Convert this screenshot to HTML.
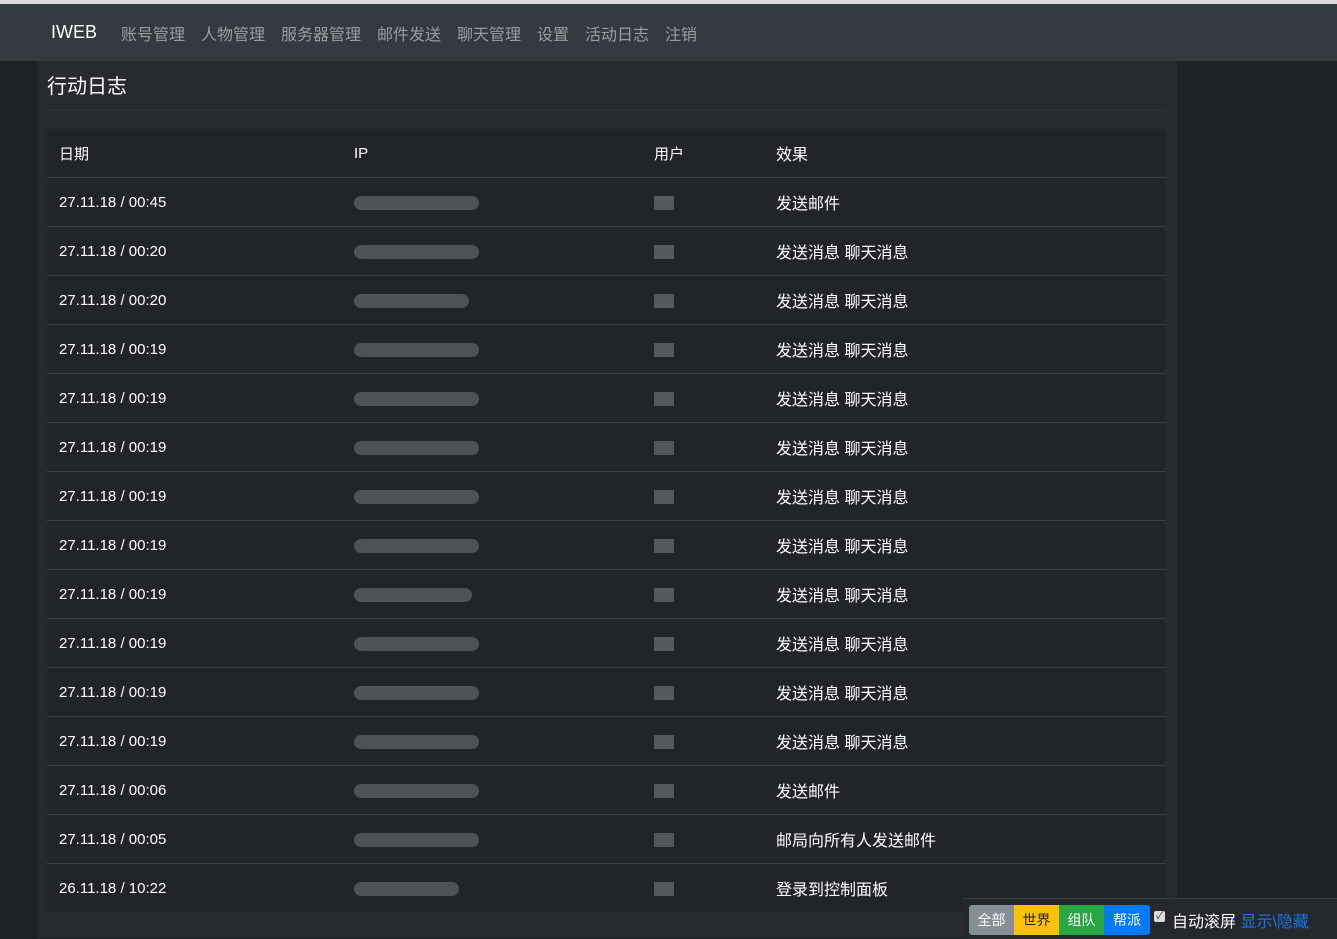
<!DOCTYPE html><html><head><meta charset="utf-8"><style>
body{margin:0;width:1337px;height:938px;overflow:hidden;background:#1c2124;font-family:"Liberation Sans","Noto Sans CJK SC",sans-serif;position:relative}
.top{position:absolute;left:0;top:0;width:1337px;height:4px;background:#dcdcdc}
.nav{position:absolute;left:0;top:4px;width:1337px;height:57px;background:#343a40}
.nav span{position:absolute;top:17px;font-size:16px;color:#9a9da0}
.brand{color:#fff!important;font-size:18px!important;top:18px!important}
.main{position:absolute;left:37px;top:61px;width:1140px;height:877px;background:#272b30}
.right{position:absolute;left:1177px;top:61px;width:160px;height:877px;background:#1e2326}
h1{position:absolute;left:47px;top:70px;margin:0;font-weight:normal;font-size:20px;color:#fff}
.hr{position:absolute;left:47px;top:110px;width:1119px;height:1px;background:#2f3438}
table{position:absolute;left:47px;top:129px;width:1119px;border-collapse:collapse;background:#212529;color:#fff;font-size:15px}
td{height:48px;border-bottom:1px solid #3a3f44;padding:0 0 0 12px}
td:last-child{font-size:16px}
tr:last-child td{border-bottom:none}
.b{display:inline-block;height:14px;background:#4e5256;border-radius:7px;vertical-align:middle}
.u{display:inline-block;width:20px;height:14px;background:#55595d;vertical-align:middle}
.bar{position:absolute;left:963px;top:898px;width:374px;height:40px;background:#25292d;border-top:1px solid #3a3e42}
.btn{position:absolute;top:905px;height:30px;line-height:30px;font-size:14px;color:#fff;text-align:center}
</style></head><body>
<div class="top"></div>
<div class="nav">
<span class="brand" style="left:51px">IWEB</span>
<span style="left:121px">账号管理</span><span style="left:201px">人物管理</span><span style="left:281px">服务器管理</span><span style="left:377px">邮件发送</span><span style="left:457px">聊天管理</span><span style="left:537px">设置</span><span style="left:585px">活动日志</span><span style="left:665px">注销</span>
</div>
<div class="main"></div><div class="right"></div>
<h1>行动日志</h1><div class="hr"></div>
<table>
<tr><td style="width:283px">日期</td><td style="width:288px">IP</td><td style="width:110px">用户</td><td>效果</td></tr>
<tr><td>27.11.18 / 00:45</td><td><span class="b" style="width:125px"></span></td><td><span class="u"></span></td><td>发送邮件</td></tr>
<tr><td>27.11.18 / 00:20</td><td><span class="b" style="width:125px"></span></td><td><span class="u"></span></td><td>发送消息 聊天消息</td></tr>
<tr><td>27.11.18 / 00:20</td><td><span class="b" style="width:115px"></span></td><td><span class="u"></span></td><td>发送消息 聊天消息</td></tr>
<tr><td>27.11.18 / 00:19</td><td><span class="b" style="width:125px"></span></td><td><span class="u"></span></td><td>发送消息 聊天消息</td></tr>
<tr><td>27.11.18 / 00:19</td><td><span class="b" style="width:125px"></span></td><td><span class="u"></span></td><td>发送消息 聊天消息</td></tr>
<tr><td>27.11.18 / 00:19</td><td><span class="b" style="width:125px"></span></td><td><span class="u"></span></td><td>发送消息 聊天消息</td></tr>
<tr><td>27.11.18 / 00:19</td><td><span class="b" style="width:125px"></span></td><td><span class="u"></span></td><td>发送消息 聊天消息</td></tr>
<tr><td>27.11.18 / 00:19</td><td><span class="b" style="width:125px"></span></td><td><span class="u"></span></td><td>发送消息 聊天消息</td></tr>
<tr><td>27.11.18 / 00:19</td><td><span class="b" style="width:118px"></span></td><td><span class="u"></span></td><td>发送消息 聊天消息</td></tr>
<tr><td>27.11.18 / 00:19</td><td><span class="b" style="width:125px"></span></td><td><span class="u"></span></td><td>发送消息 聊天消息</td></tr>
<tr><td>27.11.18 / 00:19</td><td><span class="b" style="width:125px"></span></td><td><span class="u"></span></td><td>发送消息 聊天消息</td></tr>
<tr><td>27.11.18 / 00:19</td><td><span class="b" style="width:125px"></span></td><td><span class="u"></span></td><td>发送消息 聊天消息</td></tr>
<tr><td>27.11.18 / 00:06</td><td><span class="b" style="width:125px"></span></td><td><span class="u"></span></td><td>发送邮件</td></tr>
<tr><td>27.11.18 / 00:05</td><td><span class="b" style="width:125px"></span></td><td><span class="u"></span></td><td>邮局向所有人发送邮件</td></tr>
<tr><td>26.11.18 / 10:22</td><td><span class="b" style="width:105px"></span></td><td><span class="u"></span></td><td>登录到控制面板</td></tr>
</table>
<div class="bar"></div>
<div class="btn" style="left:969px;width:45px;background:#868e96;border-radius:3px 0 0 3px">全部</div>
<div class="btn" style="left:1014px;width:45px;background:#ffc107;color:#222">世界</div>
<div class="btn" style="left:1059px;width:45px;background:#28a745">组队</div>
<div class="btn" style="left:1104px;width:46px;background:#007bff;border-radius:0 3px 3px 0">帮派</div>
<div style="position:absolute;left:1154px;top:911px;width:11px;height:11px;background:#ddd;border-radius:2px;font-size:10px;line-height:11px;text-align:center;color:#333">✓</div>
<div style="position:absolute;left:1172px;top:908px;font-size:16px;color:#fff">自动滚屏 <span style="color:#1a73e8">显示\隐藏</span></div>
</body></html>
